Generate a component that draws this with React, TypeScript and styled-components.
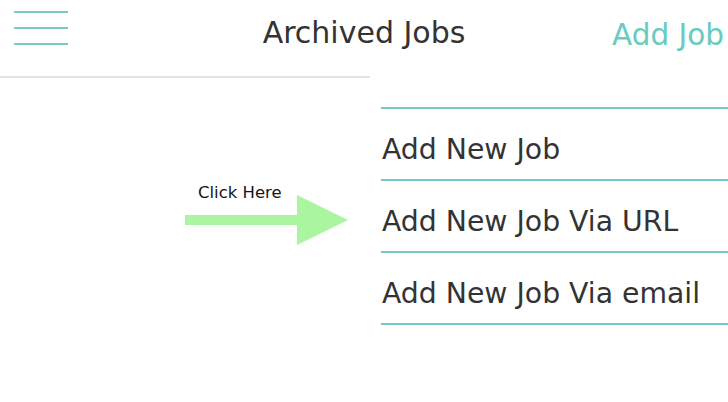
import React from "react";
import styled, { createGlobalStyle } from "styled-components";

const Global = createGlobalStyle`
  html, body { margin: 0; padding: 0; background: #ffffff; }
  body { font-family: "DejaVu Sans", sans-serif; overflow: hidden; }
`;

const Page = styled.div`
  position: relative;
  width: 728px;
  height: 402px;
  background: #ffffff;
  overflow: hidden;
`;

const Header = styled.header`
  display: grid;
  grid-template-columns: 1fr auto 1fr;
  align-items: start;
  height: 76px;
  border-bottom: 2px solid #e4e4e4;
`;

const Burger = styled.button`
  display: flex;
  flex-direction: column;
  justify-content: space-between;
  width: 54px;
  height: 34px;
  margin: 11px 0 0 14px;
  padding: 0;
  border: 0;
  background: transparent;
  justify-self: start;
`;

const BurgerLine = styled.span`
  display: block;
  height: 2px;
  background: #7cc8c9;
`;

const Title = styled.h1`
  margin: 16px 0 0;
  font-family: "DejaVu Sans", sans-serif;
  font-weight: 400;
  font-size: 30px;
  line-height: 34px;
  color: #333333;
  white-space: nowrap;
`;

const AddJob = styled.button`
  justify-self: end;
  margin: 18px 4px 0 0;
  padding: 0;
  border: 0;
  background: transparent;
  font-family: "DejaVu Sans", sans-serif;
  font-size: 29.5px;
  line-height: 34px;
  color: #68cbc1;
  white-space: nowrap;
`;

const Dropdown = styled.ul`
  position: absolute;
  top: 76px;
  left: 370px;
  right: 0;
  margin: 0;
  padding: 31px 0 0 11px;
  list-style: none;
  background: #ffffff;
`;

const MenuList = styled.div`
  border-top: 2px solid #77c7c7;
`;

const MenuItem = styled.li`
  box-sizing: border-box;
  height: 72px;
  padding: 24px 0 0 1px;
  border-bottom: 2px solid #77c7c7;
  font-family: "DejaVu Sans", sans-serif;
  font-size: 28.3px;
  line-height: 34px;
  color: #333333;
  white-space: nowrap;
`;

const Callout = styled.div`
  position: absolute;
  left: 185px;
  top: 183px;
  display: flex;
  flex-direction: column;
  align-items: flex-start;
`;

const CalloutText = styled.span`
  margin-left: 13px;
  font-family: "DejaVu Sans", sans-serif;
  font-size: 16.5px;
  line-height: 20px;
  color: #151515;
`;

const ArrowSvg = styled.svg`
  display: block;
  margin-top: -8px;
`;

const items = ["Add New Job", "Add New Job Via URL", "Add New Job Via email"];

export default function App() {
  return (
    <Page>
      <Global />
      <Header>
        <Burger aria-label="Menu">
          <BurgerLine />
          <BurgerLine />
          <BurgerLine />
        </Burger>
        <Title>Archived Jobs</Title>
        <AddJob>Add Job</AddJob>
      </Header>
      <Dropdown>
        <MenuList>
          {items.map((t) => (
            <MenuItem key={t}>{t}</MenuItem>
          ))}
        </MenuList>
      </Dropdown>
      <Callout>
        <CalloutText>Click Here</CalloutText>
        <ArrowSvg width="164" height="50" viewBox="0 0 164 50">
          <polygon
            points="0,20 112,20 112,0 163,25 112,50 112,30 0,30"
            fill="#aaf5a0"
          />
        </ArrowSvg>
      </Callout>
    </Page>
  );
}
